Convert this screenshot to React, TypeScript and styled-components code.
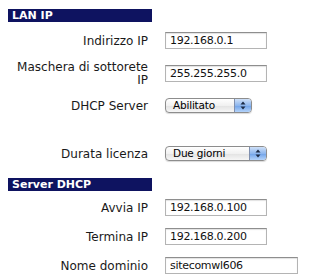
import styled, { createGlobalStyle } from "styled-components";

const GlobalStyle = createGlobalStyle`
  html, body {
    margin: 0;
    padding: 0;
    background: #ffffff;
  }
  body {
    font-family: "DejaVu Sans", Verdana, sans-serif;
    font-size: 12px;
    color: #000;
  }
`;

const Page = styled.div`
  padding: 9px 0 0 8px;
  width: 306px;
  box-sizing: border-box;
`;

const SectionTitle = styled.div<{ $gap: number }>`
  width: 144px;
  height: 13px;
  margin-top: ${(p) => p.$gap}px;
  background: #0e1360;
  color: #fff;
  font-weight: 700;
  font-size: 11px;
  line-height: 13px;
  padding-left: 4px;
  box-sizing: border-box;
`;

const Row = styled.div<{ $gap: number }>`
  display: grid;
  grid-template-columns: 144px auto;
  column-gap: 13px;
  align-items: center;
  margin-top: ${(p) => p.$gap}px;
`;

const Label = styled.div`
  text-align: right;
  padding: 2px 4px 0 6px;
  line-height: 13px;
  font-size: 12px;
  color: #1a1a1a;
`;

const TextInput = styled.div<{ $width: number }>`
  width: ${(p) => p.$width}px;
  height: 17px;
  box-sizing: border-box;
  border: 1px solid #b4b4b4;
  border-top-color: #8e8e8e;
  box-shadow: inset 0 1px 1px rgba(0, 0, 0, 0.12);
  padding-left: 4px;
  font-size: 11px;
  letter-spacing: -0.3px;
  line-height: 15px;
  color: #111;
  background: #fff;
  white-space: nowrap;
  overflow: hidden;
`;

const Popup = styled.div<{ $width: number }>`
  width: ${(p) => p.$width}px;
  height: 15px;
  box-sizing: border-box;
  display: flex;
  border: 1px solid #8d8d8d;
  border-radius: 4px;
  overflow: hidden;
  background: linear-gradient(#ffffff, #f1f1f1 50%, #e2e2e2 51%, #f6f6f6);
  box-shadow: 0 1px 1px rgba(0, 0, 0, 0.15);
`;

const PopupText = styled.div`
  flex: 1;
  padding-left: 7px;
  font-size: 10.5px;
  letter-spacing: -0.2px;
  line-height: 13px;
  color: #000;
`;

const PopupArrows = styled.div`
  width: 16px;
  border-left: 1px solid #7f8fae;
  background: linear-gradient(#cfe0f8, #8db6ee 50%, #6ea1e8 51%, #b4d3fa);
  display: flex;
  align-items: center;
  justify-content: center;
`;

function Arrows() {
  return (
    <svg width="6" height="9" viewBox="0 0 6 9">
      <path d="M3 0.5 L5.5 3.5 H0.5 Z" fill="#1c2a44" />
      <path d="M3 8.5 L5.5 5.5 H0.5 Z" fill="#1c2a44" />
    </svg>
  );
}

function Select({ value, width }: { value: string; width: number }) {
  return (
    <Popup $width={width}>
      <PopupText>{value}</PopupText>
      <PopupArrows>
        <Arrows />
      </PopupArrows>
    </Popup>
  );
}

export default function App() {
  return (
    <>
      <GlobalStyle />
      <Page>
        <SectionTitle $gap={0}>LAN IP</SectionTitle>
        <Row $gap={10}>
          <Label>Indirizzo IP</Label>
          <TextInput $width={102}>192.168.0.1</TextInput>
        </Row>
        <Row $gap={10}>
          <Label>Maschera di sottorete IP</Label>
          <TextInput $width={102}>255.255.255.0</TextInput>
        </Row>
        <Row $gap={11}>
          <Label>DHCP Server</Label>
          <Select value="Abilitato" width={87} />
        </Row>
        <Row $gap={33}>
          <Label>Durata licenza</Label>
          <Select value="Due giorni" width={102} />
        </Row>
        <SectionTitle $gap={17}>Server DHCP</SectionTitle>
        <Row $gap={8}>
          <Label>Avvia IP</Label>
          <TextInput $width={102}>192.168.0.100</TextInput>
        </Row>
        <Row $gap={12}>
          <Label>Termina IP</Label>
          <TextInput $width={102}>192.168.0.200</TextInput>
        </Row>
        <Row $gap={12}>
          <Label>Nome dominio</Label>
          <TextInput $width={133}>sitecomwl606</TextInput>
        </Row>
      </Page>
    </>
  );
}
